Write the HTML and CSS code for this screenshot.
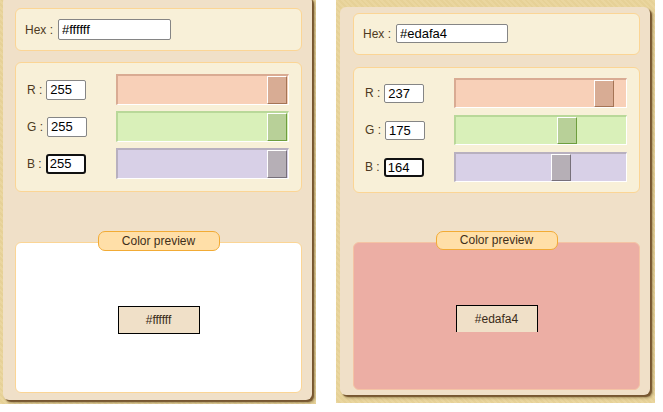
FILE: index.html
```html
<!DOCTYPE html>
<html>
<head>
<meta charset="utf-8">
<link rel="stylesheet" href="styles.css">
</head>
<body>
<div class="frame frame--a">
  <div class="panel panel--a">
    <div class="card hex-card">
      <span class="lbl">Hex :</span>
      <input class="field hex-field" value="#ffffff">
    </div>
    <div class="card rgb-card">
      <div class="row">
        <div class="chan"><span class="lbl">R :</span><input class="field num" value="255"></div>
        <div class="track track--r"><span class="thumb" style="left:149px"></span></div>
      </div>
      <div class="row">
        <div class="chan"><span class="lbl">G :</span><input class="field num" value="255"></div>
        <div class="track track--g"><span class="thumb" style="left:149px"></span></div>
      </div>
      <div class="row">
        <div class="chan"><span class="lbl">B :</span><input class="field num field--focus" value="255"></div>
        <div class="track track--b"><span class="thumb" style="left:149px"></span></div>
      </div>
    </div>
    <div class="preview">
      <div class="legend">Color preview</div>
      <div class="swatch" style="background:#ffffff"><div class="code">#ffffff</div></div>
    </div>
  </div>
</div>
<div class="frame frame--b">
  <div class="panel panel--b">
    <div class="card hex-card">
      <span class="lbl">Hex :</span>
      <input class="field hex-field" value="#edafa4">
    </div>
    <div class="card rgb-card">
      <div class="row">
        <div class="chan"><span class="lbl">R :</span><input class="field num" value="237"></div>
        <div class="track track--r"><span class="thumb" style="left:138px"></span></div>
      </div>
      <div class="row">
        <div class="chan"><span class="lbl">G :</span><input class="field num" value="175"></div>
        <div class="track track--g"><span class="thumb" style="left:101px"></span></div>
      </div>
      <div class="row">
        <div class="chan"><span class="lbl">B :</span><input class="field num field--focus" value="164"></div>
        <div class="track track--b"><span class="thumb" style="left:95px"></span></div>
      </div>
    </div>
    <div class="preview">
      <div class="legend">Color preview</div>
      <div class="swatch" style="background:#ecaea4"><div class="code">#edafa4</div></div>
    </div>
  </div>
</div>
</body>
</html>
```
FILE: styles.css
```css
* { box-sizing: border-box; }
html, body { margin: 0; padding: 0; background: #ffffff; }
body {
  display: flex;
  gap: 20px;
  align-items: flex-start;
  font-family: "Liberation Sans", Arial, sans-serif;
  font-size: 12px;
  color: #4d3a22;
  width: 663px;
  height: 412px;
  overflow: hidden;
}
.frame {
  overflow: hidden;
  background: #e8d49b;
  background-image: repeating-linear-gradient(45deg, #ead69f 0 2px, #e6d197 2px 4px);
}
.frame--a { width: 316px; height: 404px; padding-left: 3px; }
.frame--b { width: 319px; height: 403px; padding: 7px 0 0 4px; }

.panel {
  display: flex;
  flex-direction: column;
  background: #f0e0c8;
  border-radius: 6px;
  box-shadow: 2px 2px 1px #765630, 3px 3px 3px rgba(60, 40, 10, 0.35);
}
.panel--a { width: 309px; height: 404px; margin-top: -4px; padding: 12px 0 0 12px; }
.panel--b { width: 310px; height: 388px; padding: 6px 0 0 13px; }

.card {
  width: 287px;
  background: #f8f0d8;
  border: 1px solid #fbd595;
  border-radius: 6px;
}
.hex-card { display: flex; align-items: center; gap: 5px; padding: 10px 9px; }
.panel--b .hex-card { padding: 10px 9px 11px; }

.lbl { font-size: 12px; color: #4d3a22; white-space: nowrap; }

.field {
  font-family: "Liberation Sans", Arial, sans-serif;
  font-size: 13px;
  color: #000;
  background: #fff;
  border: 1px solid #858585;
  border-radius: 2px;
  padding: 0 3px;
  margin: 0;
  outline: none;
}
.hex-field { width: 113px; height: 21px; }
.panel--b .hex-field { width: 112px; height: 19px; }
.num { width: 40px; height: 20px; }
.panel--b .num { height: 19px; }
.field--focus { border: 2px solid #111; border-radius: 3px; padding: 0 2px; }

.rgb-card {
  margin-top: 11px;
  display: flex;
  flex-direction: column;
  gap: 6px;
  padding: 11px 12px 12px 11px;
}
.panel--b .rgb-card { margin-top: 12px; gap: 7px; padding: 10px 12px 10px 11px; }

.row { display: flex; align-items: center; }
.chan { width: 89px; display: flex; align-items: center; gap: 4px; }

.track {
  position: relative;
  width: 173px;
  height: 31px;
  border-style: solid;
  border-width: 2px 1px 1px 2px;
}
.panel--b .track { height: 30px; }
.thumb {
  position: absolute;
  top: 0;
  width: 20px;
  height: 100%;
  border-style: solid;
  border-width: 1px;
  border-color: #fff;
}
.track--r { background: #f8d0b8; border-color: #d9ab93 #fff #fff #d9ab93; }
.track--r .thumb { background: #d8ac94; border-right-color: #a57455; border-bottom-color: #a57455; }
.track--g { background: #d9f0b9; border-color: #b9d899 #fff #fff #b9d899; }
.track--g .thumb { background: #b8d098; border-right-color: #6e9e3e; border-bottom-color: #6e9e3e; }
.track--b { background: #d8d0e7; border-color: #b8b0bf #fff #fff #b8b0bf; }
.track--b .thumb { background: #b6afb6; border-right-color: #77707a; border-bottom-color: #77707a; }

.preview { display: flex; flex-direction: column; width: 287px; margin-top: 39px; }
.panel--b .preview { margin-top: 38px; }
.legend {
  position: relative;
  z-index: 1;
  align-self: center;
  width: 122px;
  height: 20px;
  line-height: 18px;
  text-align: center;
  background: #ffdfa8;
  border: 1px solid #f2ab35;
  border-radius: 7px;
  color: #3e2e1a;
  font-size: 12px;
}
.panel--b .legend { height: 19px; line-height: 17px; }
.swatch {
  margin-top: -9px;
  height: 151px;
  border: 1px solid #fbd595;
  border-radius: 6px;
  display: flex;
  align-items: center;
  justify-content: center;
  padding-top: 5px;
}
.panel--b .swatch { margin-top: -8px; height: 148px; padding-top: 4px; border-color: #f5c3a4; }
.code {
  width: 82px;
  height: 28px;
  line-height: 26px;
  text-align: center;
  background: #f0e0c8;
  border: 1px solid #000;
  color: #3a2a18;
  font-size: 12px;
}
.panel--b .code { height: 27px; border-bottom: none; line-height: 26px; }
```
